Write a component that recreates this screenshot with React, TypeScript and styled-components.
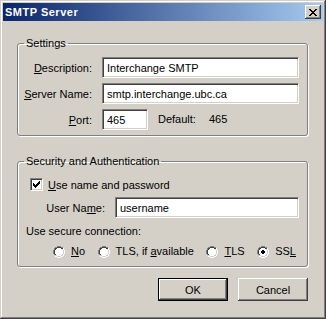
import * as React from 'react';
import styled, { createGlobalStyle } from 'styled-components';

const GlobalStyle = createGlobalStyle`
  html, body {
    margin: 0;
    padding: 0;
    background: #d4d0c8;
  }
  body {
    font-family: "Liberation Sans", Arial, sans-serif;
    font-size: 11px;
    color: #000;
  }
`;

const U = styled.span`
  text-decoration: underline;
`;

function CloseGlyph(): React.ReactElement {
  return (
    <svg width="8" height="7" viewBox="0 0 8 7" shapeRendering="crispEdges">
      <path
        d="M0 0h2v1h-2zM6 0h2v1h-2zM1 1h2v1h-2zM5 1h2v1h-2zM2 2h4v1h-4zM3 3h2v1h-2zM2 4h4v1h-4zM1 5h2v1h-2zM5 5h2v1h-2zM0 6h2v1h-2zM6 6h2v1h-2z"
        fill="#000"
      />
    </svg>
  );
}

function CheckBox({ checked }: { checked: boolean }): React.ReactElement {
  return (
    <CheckFrame>
      {checked && (
        <svg width="7" height="7" viewBox="0 0 7 7" shapeRendering="crispEdges">
          <path
            d="M6 0h1v1h-1zM5 1h2v1h-2zM0 2h1v1h-1zM4 2h3v1h-3zM0 3h2v1h-2zM3 3h3v1h-3zM0 4h5v1h-5zM1 5h3v1h-3zM2 6h1v1h-1z"
            fill="#000"
          />
        </svg>
      )}
    </CheckFrame>
  );
}

function RadioDot({ checked }: { checked: boolean }): React.ReactElement {
  return (
    <svg width="12" height="12" viewBox="0 0 12 12" shapeRendering="crispEdges">
      <path d="M4 0h4v1h-4zM2 1h2v1h-2zM8 1h2v1h-2zM1 2h1v2h-1zM0 4h1v4h-1zM1 8h1v1h-1z" fill="#808080" />
      <path d="M4 1h4v1h-4zM2 2h2v1h-2zM8 2h2v1h-2zM2 3h1v1h-1zM1 4h1v4h-1zM2 8h1v1h-1z" fill="#404040" />
      <path d="M10 2h1v2h-1zM11 4h1v4h-1zM10 8h1v2h-1zM8 10h2v1h-2zM4 11h4v1h-4zM2 10h2v1h-2z" fill="#ffffff" />
      <path d="M9 3h1v1h-1zM10 4h1v4h-1zM9 8h1v1h-1zM8 9h1v1h-1zM4 10h4v1h-4zM3 9h1v1h-1z" fill="#d4d0c8" />
      <path d="M4 2h4v1h-4zM3 3h6v1h-6zM2 4h8v4h-8zM3 8h6v1h-6zM4 9h4v1h-4z" fill="#ffffff" />
      {checked && <path d="M5 4h2v1h-2zM4 5h4v2h-4zM5 7h2v1h-2z" fill="#000" />}
    </svg>
  );
}

export default function App(): React.ReactElement {
  const radios: { id: string; label: React.ReactNode; checked: boolean }[] = [
    { id: 'no', label: <><U>N</U>o</>, checked: false },
    { id: 'tlsopt', label: <>TLS, if <U>a</U>vailable</>, checked: false },
    { id: 'tls', label: <><U>T</U>LS</>, checked: false },
    { id: 'ssl', label: <>SS<U>L</U></>, checked: true }
  ];

  return (
    <>
      <GlobalStyle />
      <Window>
        <TitleBar>
          <TitleText>SMTP Server</TitleText>
          <CloseButton>
            <CloseGlyph />
          </CloseButton>
        </TitleBar>
        <Body>
          <GroupBox>
            <Legend>Settings</Legend>
            <SettingsGrid>
              <FieldLabel><U>D</U>escription:</FieldLabel>
              <TextField>Interchange SMTP</TextField>
              <FieldLabel><U>S</U>erver Name:</FieldLabel>
              <TextField>smtp.interchange.ubc.ca</TextField>
              <FieldLabel><U>P</U>ort:</FieldLabel>
              <PortRow>
                <TextField $width={46}>465</TextField>
                <Plain>Default:</Plain>
                <Plain>465</Plain>
              </PortRow>
            </SettingsGrid>
          </GroupBox>

          <SecurityBox>
            <Legend>Security and Authentication</Legend>
            <SecurityContent>
              <CheckRow>
                <CheckBox checked />
                <span><U>U</U>se name and password</span>
              </CheckRow>
              <UserRow>
                <FieldLabel>User Na<U>m</U>e:</FieldLabel>
                <TextField>username</TextField>
              </UserRow>
              <Plain>Use secure connection:</Plain>
              <RadioRow>
                {radios.map((r) => (
                  <RadioItem key={r.id}>
                    <RadioDot checked={r.checked} />
                    <span>{r.label}</span>
                  </RadioItem>
                ))}
              </RadioRow>
            </SecurityContent>
          </SecurityBox>

          <ButtonRow>
            <PushButton $default>OK</PushButton>
            <PushButton>Cancel</PushButton>
          </ButtonRow>
        </Body>
      </Window>
    </>
  );
}

const Window = styled.div`
  width: 326px;
  height: 319px;
  box-sizing: border-box;
  padding: 3px;
  background: #d4d0c8;
  box-shadow:
    inset -1px -1px #404040,
    inset 1px 1px #d4d0c8,
    inset -2px -2px #808080,
    inset 2px 2px #ffffff;
  display: flex;
  flex-direction: column;
`;

const TitleBar = styled.div`
  height: 18px;
  display: flex;
  align-items: center;
  justify-content: space-between;
  padding: 0 2px;
  background: linear-gradient(to right, #0a246a, #a6caf0);
`;

const TitleText = styled.span`
  color: #fff;
  font-weight: bold;
  font-size: 11px;
  line-height: 13px;
  letter-spacing: 0.5px;
`;

const CloseButton = styled.div`
  width: 16px;
  height: 14px;
  box-sizing: border-box;
  display: flex;
  align-items: center;
  justify-content: center;
  background: #d4d0c8;
  box-shadow:
    inset -1px -1px #404040,
    inset 1px 1px #ffffff,
    inset -2px -2px #808080;
`;

const Body = styled.div`
  display: flex;
  flex-direction: column;
  padding: 16px 15px 0 14px;
`;

const GroupBox = styled.fieldset`
  margin: 0;
  padding: 0;
  border: 1px solid #808080;
  border-radius: 3px;
  box-shadow: 1px 1px 0 #ffffff, inset 1px 1px 0 #ffffff;
  min-width: 0;
`;

const SecurityBox = styled(GroupBox)`
  margin-top: 19px;
`;

const Legend = styled.legend`
  margin-left: 6px;
  padding: 0 2px;
  line-height: 13px;
  font-size: 11px;
`;

const SettingsGrid = styled.div`
  display: grid;
  grid-template-columns: 74px 1fr;
  column-gap: 10px;
  row-gap: 5px;
  align-items: center;
  padding: 7px 8px 5px 0;
`;

const FieldLabel = styled.span`
  text-align: right;
  white-space: nowrap;
`;

const Plain = styled.span`
  line-height: 13px;
  white-space: nowrap;
`;

const TextField = styled.div<{ $width?: number }>`
  box-sizing: border-box;
  height: 21px;
  ${(p) => (p.$width ? `width: ${p.$width}px;` : '')}
  padding: 0 4px;
  display: flex;
  align-items: center;
  background: #ffffff;
  border: 1px solid;
  border-color: #808080 #ffffff #ffffff #808080;
  box-shadow: inset 1px 1px #404040, inset -1px -1px #d4d0c8;
  white-space: nowrap;
  overflow: hidden;
`;

const PortRow = styled.div`
  display: flex;
  align-items: center;
  gap: 10px;

  & > span:last-child {
    margin-left: 3px;
  }
`;

const SecurityContent = styled.div`
  display: flex;
  flex-direction: column;
  padding: 10px 8px 8px 8px;
`;

const CheckRow = styled.label`
  display: flex;
  align-items: center;
  gap: 5px;
  margin-left: 4px;
  height: 13px;
`;

const CheckFrame = styled.span`
  width: 13px;
  height: 13px;
  box-sizing: border-box;
  display: flex;
  align-items: center;
  justify-content: center;
  background: #ffffff;
  border: 1px solid;
  border-color: #808080 #ffffff #ffffff #808080;
  box-shadow: inset 1px 1px #404040, inset -1px -1px #d4d0c8;
`;

const UserRow = styled.div`
  display: grid;
  grid-template-columns: 79px 1fr;
  column-gap: 10px;
  align-items: center;
  margin: 6px 0 7px 0;
`;

const RadioRow = styled.div`
  display: flex;
  justify-content: space-between;
  align-items: center;
  margin-top: 7px;
  padding: 0 3px 0 27px;
`;

const RadioItem = styled.label`
  display: flex;
  align-items: center;
  gap: 6px;
  line-height: 13px;
`;

const ButtonRow = styled.div`
  display: flex;
  justify-content: flex-end;
  gap: 10px;
  margin-top: 11px;
`;

const PushButton = styled.button<{ $default?: boolean }>`
  width: 70px;
  height: 23px;
  box-sizing: border-box;
  padding: 0;
  font-family: "Liberation Sans", Arial, sans-serif;
  font-size: 11px;
  color: #000;
  background: #d4d0c8;
  border: none;
  box-shadow: ${(p) =>
    p.$default
      ? 'inset 0 0 0 1px #000, inset -2px -2px #404040, inset 2px 2px #ffffff, inset -3px -3px #808080'
      : 'inset -1px -1px #404040, inset 1px 1px #ffffff, inset -2px -2px #808080'};
`;
